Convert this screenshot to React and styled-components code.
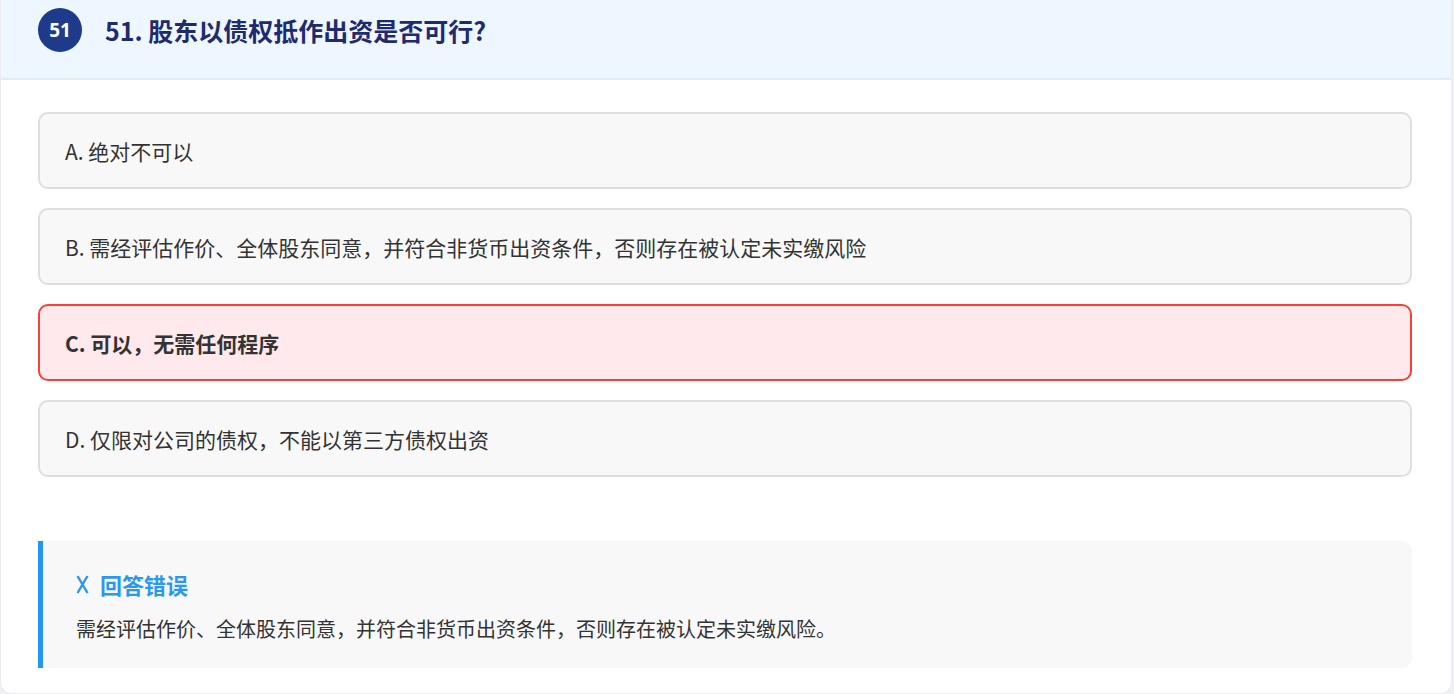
import React from 'react';
import styled, { createGlobalStyle } from 'styled-components';

const GlobalStyle = createGlobalStyle`
  html, body {
    margin: 0;
    padding: 0;
    background: #f0f1f5;
    font-family: "Noto Sans CJK SC", "Noto Sans", sans-serif;
  }
`;

const Card = styled.div`
  margin: 0 3px 2px 1px;
  background: #ffffff;
  border-radius: 0 0 10px 10px;
  box-shadow: 0 0 2px rgba(0, 0, 0, 0.08);
  overflow: hidden;
`;

const Header = styled.div`
  display: flex;
  align-items: center;
  gap: 23px;
  height: 60px;
  padding: 30px 37px 18px 37px;
  margin-top: -30px;
  background: #eef6ff;
  border-bottom: 2px solid #dfeafb;
`;

const Badge = styled.div`
  width: 44px;
  height: 44px;
  border-radius: 50%;
  background: #1e3a8a;
  color: #ffffff;
  display: flex;
  align-items: center;
  justify-content: center;
  font-family: "Open Sans", "Noto Sans", sans-serif;
  font-size: 19px;
  font-weight: 700;
  flex-shrink: 0;
`;

const Title = styled.h2`
  margin: 0;
  font-size: 25px;
  font-weight: 700;
  color: #1f2a6f;
  line-height: 1.2;
`;

const Body = styled.div`
  padding: 32px 39px 25px 37px;
`;

const Options = styled.div`
  display: flex;
  flex-direction: column;
  gap: 19px;
`;

const Option = styled.div`
  height: 73px;
  display: flex;
  align-items: center;
  padding: 0 25px;
  border-radius: 10px;
  border: 2px solid ${p => (p.$wrong ? '#f44336' : '#dedede')};
  background: ${p => (p.$wrong ? '#ffe9ec' : '#f8f8f8')};
  color: #333333;
  font-size: 21px;
  font-weight: ${p => (p.$wrong ? 700 : 400)};
`;

const Explanation = styled.div`
  margin-top: 64px;
  padding: 26px 30px 22px 33px;
  background: #f8f8f8;
  border-left: 5px solid #2196f3;
  border-radius: 0 10px 10px 0;
`;

const ExplainTitle = styled.div`
  display: flex;
  align-items: center;
  gap: 11px;
  font-size: 22px;
  font-weight: 700;
  color: #2b98f0;
  line-height: 34px;
  margin-bottom: 11px;
`;

const ExplainText = styled.div`
  font-size: 20px;
  color: #333333;
  line-height: 34px;
`;

const CrossIcon = () => (
  <svg width="13" height="19" viewBox="0 0 13 19" fill="none">
    <path d="M1.5 1 L11.5 18 M11.5 1 L1.5 18" stroke="#2b98f0" strokeWidth="2.4" strokeLinecap="butt" />
  </svg>
);

const options = [
  { key: 'A', text: '绝对不可以' },
  { key: 'B', text: '需经评估作价、全体股东同意，并符合非货币出资条件，否则存在被认定未实缴风险' },
  { key: 'C', text: '可以，无需任何程序', wrong: true },
  { key: 'D', text: '仅限对公司的债权，不能以第三方债权出资' },
];

export default function App() {
  return (
    <>
      <GlobalStyle />
      <Card>
        <Header>
          <Badge>51</Badge>
          <Title>51. 股东以债权抵作出资是否可行?</Title>
        </Header>
        <Body>
          <Options>
            {options.map(o => (
              <Option key={o.key} $wrong={o.wrong}>
                {o.key}. {o.text}
              </Option>
            ))}
          </Options>
          <Explanation>
            <ExplainTitle>
              <CrossIcon />
              回答错误
            </ExplainTitle>
            <ExplainText>
              需经评估作价、全体股东同意，并符合非货币出资条件，否则存在被认定未实缴风险。
            </ExplainText>
          </Explanation>
        </Body>
      </Card>
    </>
  );
}
